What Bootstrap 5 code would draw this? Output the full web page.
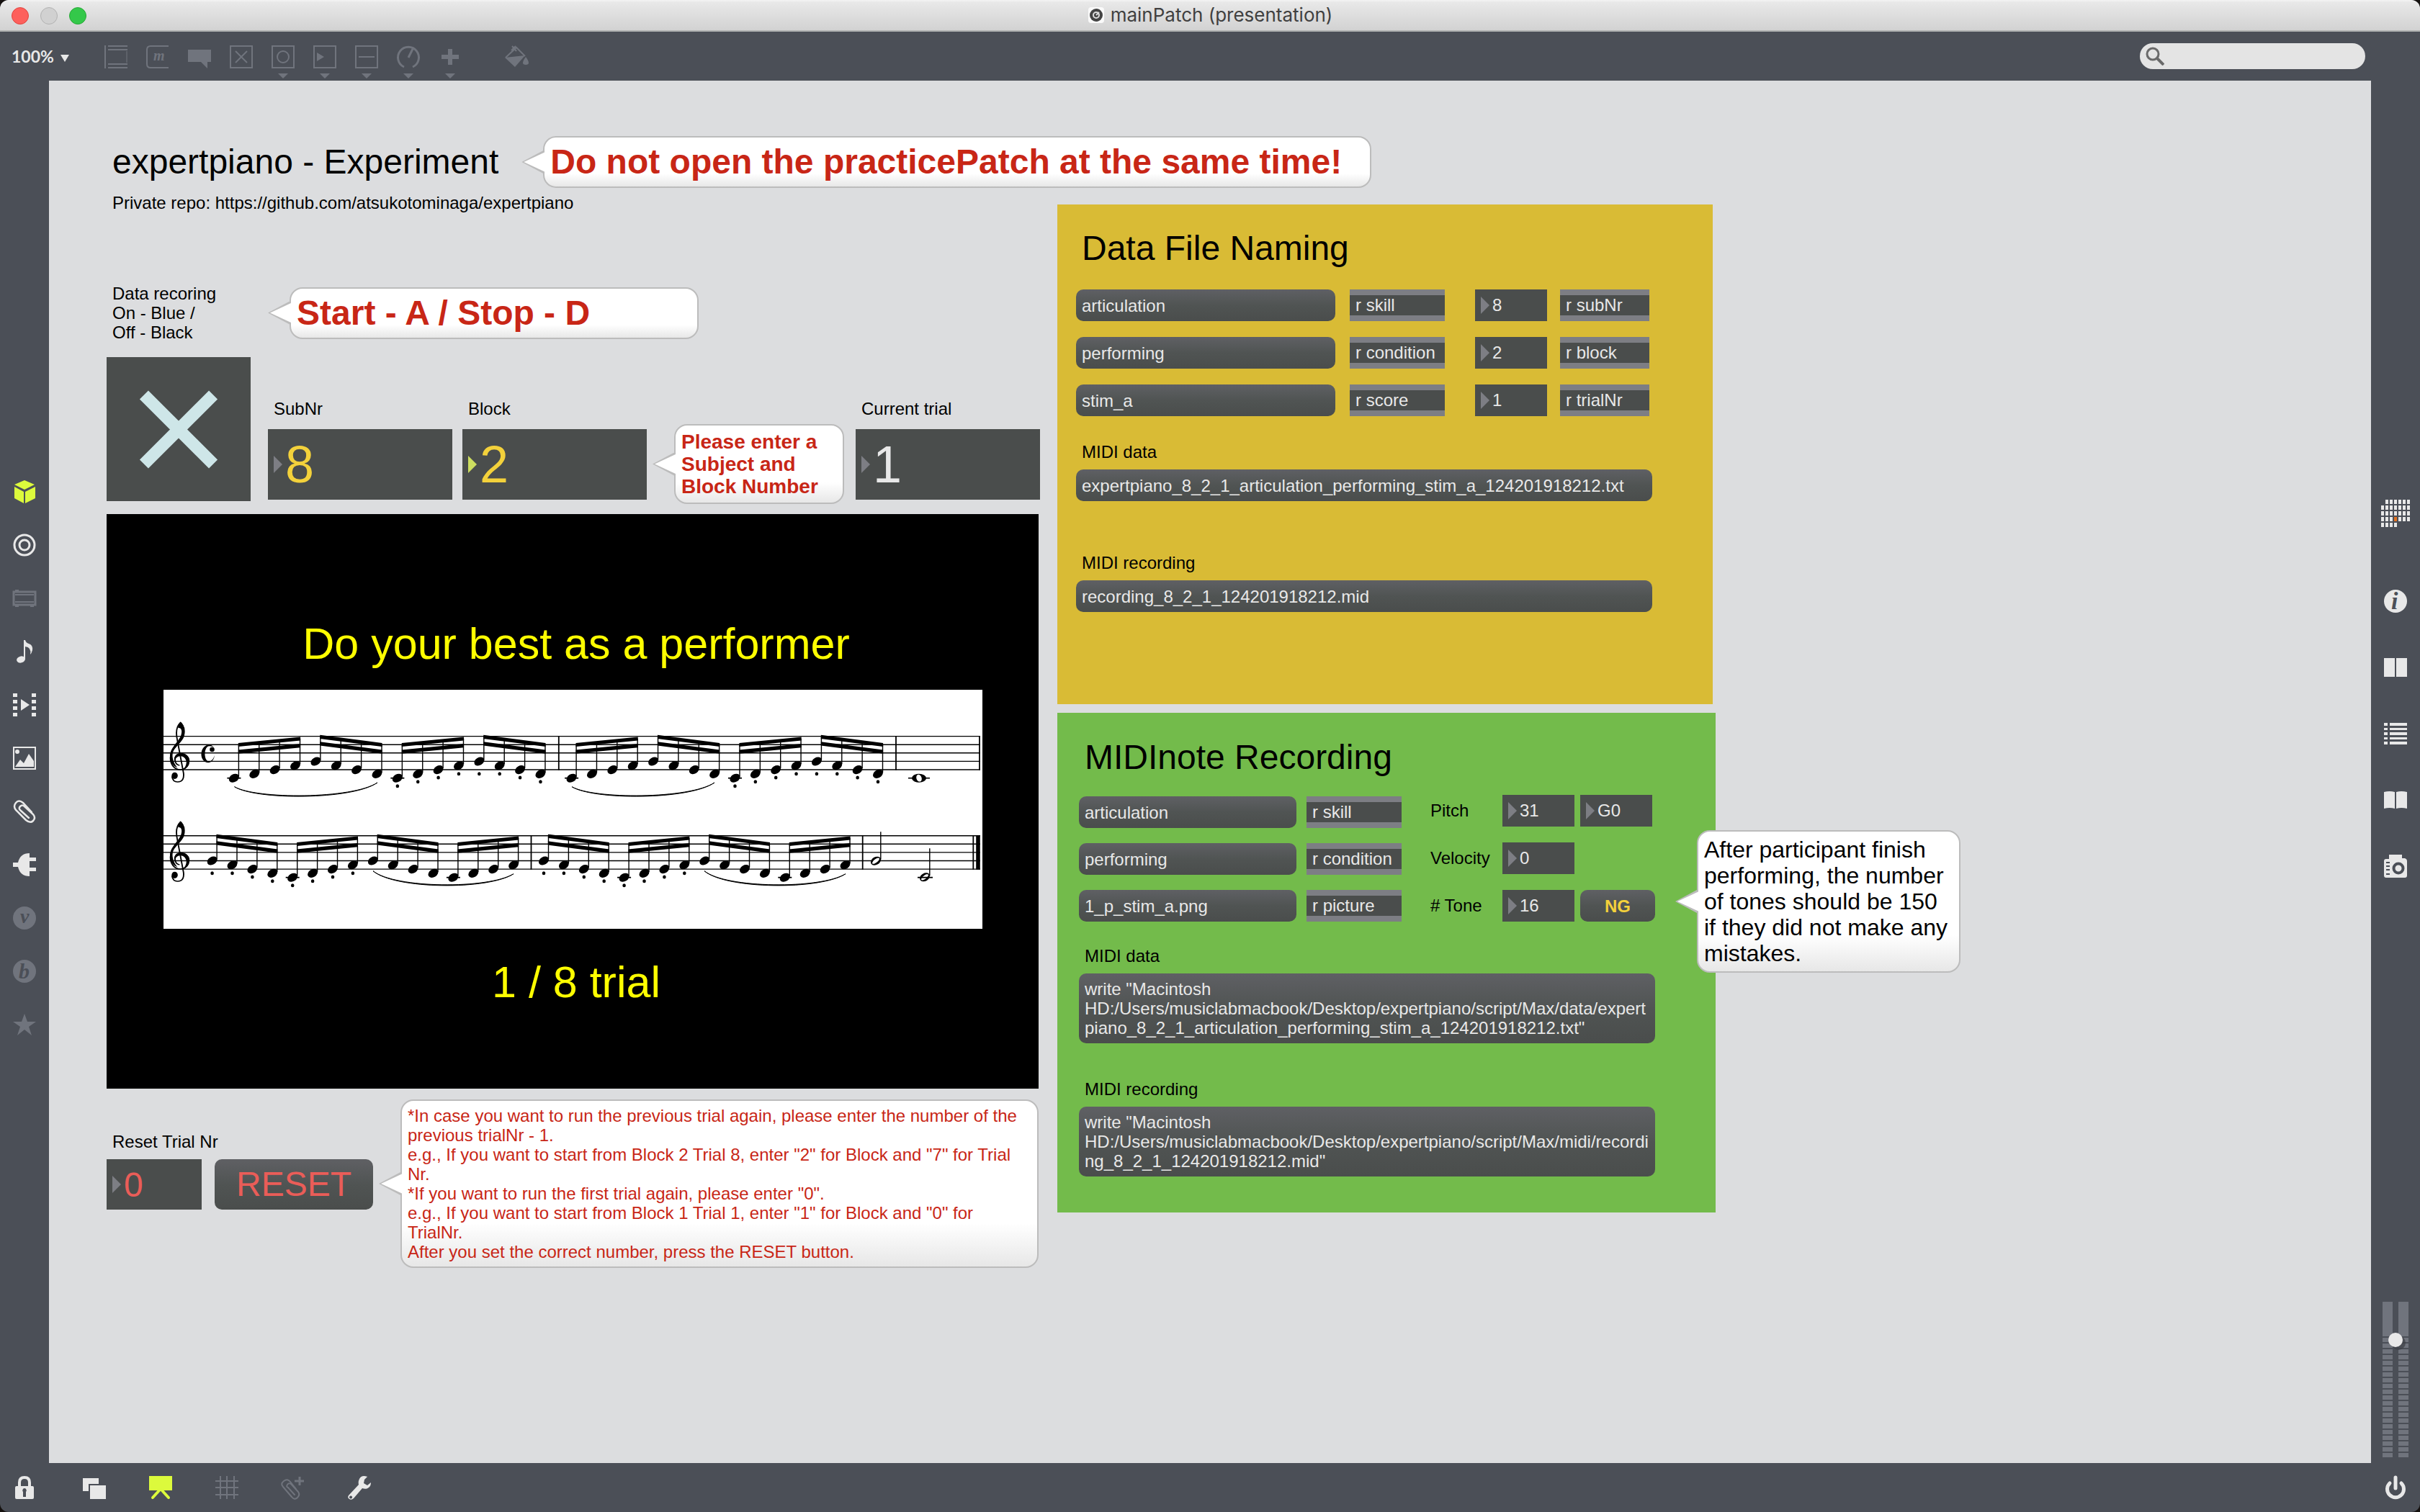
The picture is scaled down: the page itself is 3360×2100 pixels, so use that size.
<!DOCTYPE html>
<html lang="en">
<head>
<meta charset="utf-8">
<meta name="viewport" content="width=device-width, initial-scale=1">
<title>mainPatch (presentation)</title>
<link href="https://cdn.jsdelivr.net/npm/bootstrap@5.3.0/dist/css/bootstrap.min.css" rel="stylesheet">
<style>
:root{--bar:#4b4f57;--ink:#e8e8e8;--dim:#70747d;--box:#4a4d4c;--lime:#dcfa3c;--red:#c82616;--amber:#f3d13b;}
body{background:#15110f;font-family:"Liberation Sans",Arial,sans-serif;font-size:24px;line-height:27px;color:#000;}
.win{min-height:100vh;background:var(--bar);border-radius:12px;overflow:hidden;}
.titlebar{height:44px;background:linear-gradient(#f4f4f4,#e8e8e8 8%,#d2d2d2);border-bottom:2px solid #b0b2b2;color:#404040;font:26px/40px Inter,"Liberation Sans",sans-serif;}
.lights{left:16px;top:10px;gap:16px;}
.lights button{width:24px;height:24px;border-radius:50%;padding:0;border:1px solid #e0443e;background:#fd605c;}
.lights button:nth-child(2){background:#d1d1d1;border-color:#b1b1b1;}
.lights button:nth-child(3){background:#34c84a;border-color:#27a836;}
.toolbar{height:68px;padding:0 76px 0 16px;color:var(--dim);}
.ico{background:none;border:0;padding:0;color:inherit;display:block;line-height:0;}
.ico svg{display:block;overflow:visible;}
.zoomsel{width:129px;font:bold 23px/28px Lato,sans-serif;color:var(--ink);background:none;border:0;text-align:left;padding:0;}
.tools{gap:26px;padding-top:18px;}
.tools .fillbtn{margin-left:34px;}
.finder{width:313px;height:36px;border-radius:18px;background:#e4e4e4;padding:0 8px;color:#6a6a6a;}
.finder input{background:none;border:0;width:250px;font-size:22px;outline:0;}
.side{width:68px;color:var(--ink);}
.side-l{padding-top:555px;gap:42px;}
.side-r{padding-top:581px;gap:60px;padding-bottom:8px;}
.side-r .firstico{margin-bottom:26px;}
.off{color:var(--dim);}
.on{color:var(--lime);}
.footbar{height:68px;color:var(--ink);padding:0 18px;gap:60px;}
.footbar .lockbtn{margin-right:5px;}
.canvas{background:#dcdddf;padding:77px 80px;}
.level{width:36px;height:216px;}
.level i{flex:1;background:linear-gradient(var(--dim) 48px,transparent 48px),repeating-linear-gradient(transparent 0 2px,var(--dim) 2px 8px);}
.level input{position:absolute;width:216px;height:36px;left:-90px;top:90px;transform:rotate(-90deg);appearance:none;background:none;margin:0;}
.level input::-webkit-slider-thumb{appearance:none;width:20px;height:20px;border-radius:50%;background:var(--ink);border:0;box-shadow:-4px 4px 0 rgba(60,63,68,.7);}
.big{font-size:48px;line-height:54px;font-weight:400;}
.tag{padding-left:8px;display:block;}
.tip{position:relative;border:2px solid #bcbcbc;border-radius:18px;background:linear-gradient(#fff 74%,#e7e7e7);padding:7px 14px 7px 8px;flex:none;color:var(--red);}
.tip::before,.tip::after{content:"";position:absolute;clip-path:polygon(0 50%,100% 0,100% 100%);}
.tip::before{left:-32px;width:30px;height:32px;top:calc(50% - 16px);background:#bcbcbc;}
.tip::after{left:-29px;width:30px;height:28px;top:calc(50% - 14px);background:#fff;}
.tip-b{font-weight:700;}
.tip-m{font-size:28px;line-height:31px;}
.tip-l{font-size:32px;line-height:36px;color:#000;}
.left{width:1294px;flex:none;}
.w-head{width:1150px;margin-left:62px;}.w-start{width:568px;}.w-sub{width:236px;margin:0 0 -4px 24px;}.w-long{width:886px;}.w-after{width:366px;}
.repo{margin-top:7px;}
.startrow{margin-top:99px;}
.startrow .tag{width:254px;}
.inputs{margin-top:21px;margin-right:-2px;gap:14px;height:200px;}
.tgl{appearance:none;width:200px;height:200px;background:var(--box);margin:0 10px 0 0;display:block;flex:none;position:relative;}
.tgl::before,.tgl::after{content:"";position:absolute;left:32px;top:92px;width:136px;height:17px;background:#cee6e8;transform:rotate(45deg);}
.tgl::after{transform:rotate(-45deg);}
.num{position:relative;background:var(--box);color:var(--ink);height:44px;width:100px;flex:none;}
.num::before{content:"";position:absolute;left:8px;top:50%;width:12px;height:24px;margin-top:-12px;background:#7d7e84;clip-path:polygon(0 0,100% 50%,0 100%);}
.num.hot::before{background:#cdde60;}
.num input{width:100%;height:100%;border:0;background:none;color:inherit;padding:0 0 0 24px;outline:0;display:block;}
.num-xl{width:256px;height:98px;font-size:72px;margin:15px 0 2px;}
.num-l{width:132px;height:70px;font-size:48px;margin-right:18px;}
.screen{background:#000;color:#ff0;height:798px;margin-top:18px;padding-top:146px;font-size:61px;line-height:68px;}
.screen div{padding-left:10px;}
.screen svg{width:1137px;height:332px;background:#fff;margin:30px 0 40px;max-width:100%;}
.msg{background:linear-gradient(#5f6064,#505453 50%,#4a4d4c);border:0;border-radius:10px;color:var(--ink);padding:8px;min-height:44px;text-align:left;display:block;flex:none;line-height:27px;overflow-wrap:break-word;}
.msg-c{text-align:center;}
.amber{color:var(--amber);}
.coral{color:#ea5d58;}
.resetrow{margin-top:15px;}
.resetrow .grp{margin:45px 38px 0 0;}
.resetrow .grp .tag{margin-bottom:11px;}
.resetbtn{width:220px;font-size:48px;line-height:54px;}
.obj{background:var(--box);border:solid #7d7e84;border-width:8px 0;height:44px;line-height:28px;padding-left:8px;color:var(--ink);flex:none;width:132px;}
.right{margin:23px 0 0 26px;gap:12px;}
.panel{height:694px;position:relative;}
.p-data{background:#d9bb35;width:910px;padding:34px 26px;}
.p-note{background:#73bb4b;width:914px;padding:35px 30px;}
.p-data .rows{gap:22px;margin:30px 0 36px;}
.p-data .rows .msg{width:360px;margin-right:20px;}
.p-data .rows .obj{margin-right:42px;}
.p-data .rows .obj:last-child{width:124px;margin:0 0 0 18px;}
.wide{width:800px;margin-top:11px;}
.p-data .again{margin-top:72px;}
.p-note .rows{margin:25px 0 34px;}
.msgs .msg{width:302px;}
.g21{gap:21px;}.g22{gap:22px;}
.p-note .objs{margin:0 40px 0 14px;}
.p-note .names{width:100px;flex:none;}
.p-note .names label{line-height:44px;}
.p-note .again{margin-top:50px;}
.ngbtn{width:104px;font-weight:700;}
.aftertip{position:absolute;left:888px;top:163px;}
</style>
</head>
<body>
<div class="win d-flex flex-column">
<header class="titlebar position-relative d-flex justify-content-center align-items-center">
  <div class="lights position-absolute d-flex"><button aria-label="Close"></button><button aria-label="Minimise"></button><button aria-label="Zoom"></button></div>
  <svg class="me-2" width="24" height="24" viewBox="0 0 24 24"><rect x="1" y="1" width="22" height="22" rx="4" fill="#fafafa"/><circle cx="12" cy="12" r="9" fill="#444"/><circle cx="12" cy="12" r="4" fill="none" stroke="#ddd" stroke-width="2"/><path d="M12 12l4-4" stroke="#ddd" stroke-width="2"/></svg>
  <span>mainPatch (presentation)</span>
</header>
<nav class="toolbar d-flex justify-content-between" aria-label="Toolbar">
  <div class="d-flex">
    <button class="zoomsel">100% <svg class="ms-1" width="12" height="12" viewBox="0 0 12 12"><path d="M0 1h12L6 11z" fill="currentColor"/></svg></button>
    <div class="tools d-flex">
      <button class="ico" aria-label="Object"><svg width="32" height="48" fill="none" stroke="currentColor" stroke-width="2"><path d="M1 0v32M5 1h27M5 6h27M5 26h27M5 31h27"/><path d="M31 8v16" stroke-width="1"/></svg></button>
      <button class="ico" aria-label="Message"><svg width="32" height="48" fill="none" stroke="currentColor" stroke-width="2"><path d="M31 1H6Q1 1 1 6V26Q1 31 6 31H31"/><text x="10" y="21" font-family="Liberation Serif" font-style="italic" font-weight="bold" font-size="20" fill="currentColor" stroke="none">m</text></svg></button>
      <button class="ico" aria-label="Comment"><svg width="32" height="48" fill="currentColor"><path d="M0 6h32v17h-5v9l-9-9H0z"/></svg></button>
      <button class="ico" aria-label="Toggle"><svg width="32" height="48" fill="none" stroke="currentColor" stroke-width="2"><path d="M1 1h30v30H1zM8 8l16 16M24 8L8 24"/></svg></button>
      <button class="ico" aria-label="Button"><svg width="32" height="48" fill="none" stroke="currentColor" stroke-width="2"><path d="M1 1h30v30H1z"/><circle cx="16" cy="16" r="8"/><path d="M9 39h14l-7 7z" fill="currentColor" stroke="none"/></svg></button>
      <button class="ico" aria-label="Number"><svg width="32" height="48" fill="none" stroke="currentColor" stroke-width="2"><path d="M1 1h30v30H1z"/><path d="M5 10l10 6-10 6zM9 39h14l-7 7z" fill="currentColor" stroke="none"/></svg></button>
      <button class="ico" aria-label="Slider"><svg width="32" height="48" fill="none" stroke="currentColor" stroke-width="2"><path d="M1 1h30v30H1zM5 16h22"/><path d="M9 39h14l-7 7z" fill="currentColor" stroke="none"/></svg></button>
      <button class="ico" aria-label="Dial"><svg width="32" height="48" fill="none" stroke="currentColor" stroke-width="3"><path d="M10 30A14.500 14.500 0 1 1 22 30M16 17l6-12"/><path d="M9 39h14l-7 7z" fill="currentColor" stroke="none"/></svg></button>
      <button class="ico" aria-label="Add"><svg width="32" height="48" fill="currentColor"><path d="M13 5h6v8h9v6h-9v8h-6v-8H4v-6h9zM9 39h14l-7 7z"/></svg></button>
      <button class="ico fillbtn" aria-label="Format palette"><svg width="34" height="48" fill="none" stroke="currentColor" stroke-width="2"><path d="M1 17L16 3l12 12M10 1l6 7M15 1l-6 6"/><path d="M0 17l28-3-14 16zM29 16q8 11 0 11t0-11z" fill="currentColor" stroke="none"/></svg></button>
    </div>
  </div>
  <label class="finder d-flex align-items-center align-self-center"><svg width="26" height="26" fill="none" stroke="currentColor" stroke-width="3"><circle cx="10" cy="10" r="8"/><path d="M16 16l9 9" stroke-width="4"/></svg><input type="search" aria-label="Search"></label>
</nav>
<div class="d-flex flex-grow-1">
  <aside class="side side-l d-flex flex-column align-items-center">
    <button class="ico on" aria-label="Packages"><svg width="32" height="32" fill="currentColor"><path d="M16 0l14 6-14 7L2 6zM2 9l13 7v16L2 25zM31 9v16l-14 7V16z"/></svg></button>
    <button class="ico" aria-label="Objects"><svg width="32" height="32" fill="none" stroke="currentColor" stroke-width="3"><circle cx="16" cy="16" r="14"/><circle cx="16" cy="16" r="7"/></svg></button>
    <button class="ico off" aria-label="Devices"><svg width="32" height="32" fill="none" stroke="currentColor" stroke-width="3"><path d="M1 7h30v18H1z"/><path d="M3 11h26M3 21h26" stroke-width="2"/><path d="M3 4h5v3H3zM3 25h5v3H3zM24 25h5v3h-5z" fill="currentColor" stroke="none"/></svg></button>
    <button class="ico" aria-label="Audio"><svg width="32" height="32" fill="currentColor"><ellipse cx="11" cy="27" rx="6" ry="4.500" transform="rotate(-15 11 27)"/><path d="M15 0h2q1 4 5 5 6 2 5 9-1 4-3 6 2-10-7-11v18h-2z"/></svg></button>
    <button class="ico" aria-label="Video"><svg width="32" height="32" fill="currentColor"><path d="M0 0h6v5H0zM0 9h6v5H0zM0 18h6v5H0zM0 27h6v5H0zM26 0h6v5h-6zM26 9h6v5h-6zM26 18h6v5h-6zM26 27h6v5h-6zM11 8l12 8-12 8z"/></svg></button>
    <button class="ico" aria-label="Images"><svg width="32" height="32" fill="currentColor"><path d="M1 1h30v30H1z" fill="none" stroke="currentColor" stroke-width="2"/><circle cx="6" cy="7" r="3"/><path d="M3 28l7-10 5 5 7-13 7 10v8z"/></svg></button>
    <button class="ico" aria-label="Clippings"><svg width="32" height="32" fill="none" stroke="currentColor" stroke-width="2.500" stroke-linecap="round"><path d="M26 17L14 4Q8 -1 4 4T4 14L18 28Q24 33 28 29T28 20L16 9Q13 6 10 9T11 15L22 25"/></svg></button>
    <button class="ico" aria-label="Plug-ins"><svg width="32" height="32" fill="currentColor"><path d="M23 0v6h9v5h-9v9h9v5h-9v7q-13 0-16-13H0v-6h7Q10 0 23 0z"/></svg></button>
    <button class="ico off" aria-label="Vizzie"><svg width="32" height="32" fill="currentColor"><circle cx="16" cy="16" r="16"/><text x="10" y="23" font-family="Liberation Serif" font-style="italic" font-weight="bold" font-size="28" fill="#4b4f57">v</text></svg></button>
    <button class="ico off" aria-label="Beap"><svg width="32" height="32" fill="currentColor"><circle cx="16" cy="16" r="16"/><text x="8" y="26" font-family="Liberation Serif" font-style="italic" font-weight="bold" font-size="30" fill="#4b4f57">b</text></svg></button>
    <button class="ico off" aria-label="Favourites"><svg width="32" height="32" fill="currentColor"><path d="M16 1l4 11h12l-10 7 4 12-10-8-10 8 4-12L0 12h12z"/></svg></button>
  </aside>
  <main class="canvas flex-grow-1">
    <div class="d-flex align-items-center">
      <h1 class="big tag m-0">expertpiano - Experiment</h1>
      <div class="tip tip-b big w-head">Do not open the practicePatch at the same time!</div>
    </div>
    <div class="d-flex">
      <section class="left">
        <div class="tag repo">Private repo: https://github.com/atsukotominaga/expertpiano</div>
        <div class="startrow d-flex align-items-center">
          <label class="tag" for="rec">Data recoring<br>On - Blue /<br>Off - Black</label>
          <div class="tip tip-b big w-start">Start - A / Stop - D</div>
        </div>
        <div class="inputs d-flex align-items-end">
          <input type="checkbox" class="tgl" id="rec" checked>
          <div><label class="tag" for="sub">SubNr</label><div class="num num-xl amber"><input id="sub" value="8"></div></div>
          <div><label class="tag" for="blk">Block</label><div class="num num-xl hot amber"><input id="blk" value="2"></div></div>
          <div class="tip tip-b tip-m w-sub">Please enter a<br>Subject and<br>Block Number</div>
          <div class="ms-auto"><label class="tag" for="cur">Current trial</label><div class="num num-xl"><input id="cur" value="1"></div></div>
        </div>
        <div class="screen d-flex flex-column align-items-center">
          <div>Do your best as a performer</div>
          <svg id="score" viewBox="0 0 1137 332" role="img" aria-label="Two staves of piano exercise"></svg>
          <div>1 / 8 trial</div>
        </div>
        <div class="resetrow d-flex align-items-start">
          <div class="grp">
            <label class="tag" for="rst">Reset Trial Nr</label>
            <div class="d-flex"><div class="num num-l coral"><input id="rst" value="0"></div><button class="msg msg-c resetbtn coral">RESET</button></div>
          </div>
          <div class="tip w-long">*In case you want to run the previous trial again, please enter the number of the previous trialNr - 1.<br>e.g., If you want to start from Block 2 Trial 8, enter "2" for Block and "7" for Trial Nr.<br>*If you want to run the first trial again, please enter "0".<br>e.g., If you want to start from Block 1 Trial 1, enter "1" for Block and "0" for TrialNr.<br>After you set the correct number, press the RESET button.</div>
        </div>
      </section>
      <section class="right d-flex flex-column">
        <div class="panel p-data">
          <h2 class="big tag m-0">Data File Naming</h2>
          <div class="rows d-flex flex-column">
            <div class="d-flex"><button class="msg">articulation</button><div class="obj">r skill</div><div class="num"><input aria-label="subNr" value="8"></div><div class="obj">r subNr</div></div>
            <div class="d-flex"><button class="msg">performing</button><div class="obj">r condition</div><div class="num"><input aria-label="block" value="2"></div><div class="obj">r block</div></div>
            <div class="d-flex"><button class="msg">stim_a</button><div class="obj">r score</div><div class="num"><input aria-label="trialNr" value="1"></div><div class="obj">r trialNr</div></div>
          </div>
          <div class="tag">MIDI data</div>
          <button class="msg wide">expertpiano_8_2_1_articulation_performing_stim_a_124201918212.txt</button>
          <div class="tag again">MIDI recording</div>
          <button class="msg wide">recording_8_2_1_124201918212.mid</button>
        </div>
        <div class="panel p-note">
          <h2 class="big tag m-0">MIDInote Recording</h2>
          <div class="rows d-flex align-items-end">
            <div class="msgs d-flex flex-column g21"><button class="msg">articulation</button><button class="msg">performing</button><button class="msg">1_p_stim_a.png</button></div>
            <div class="objs d-flex flex-column g21"><div class="obj">r skill</div><div class="obj">r condition</div><div class="obj">r picture</div></div>
            <div class="names d-flex flex-column g22"><label for="pit">Pitch</label><label for="vel">Velocity</label><label for="ton"># Tone</label></div>
            <div class="d-flex flex-column g22">
              <div class="d-flex gap-2"><div class="num"><input id="pit" value="31"></div><div class="num"><input aria-label="Note name" value="G0"></div></div>
              <div class="num"><input id="vel" value="0"></div>
              <div class="d-flex gap-2"><div class="num"><input id="ton" value="16"></div><button class="msg msg-c ngbtn amber">NG</button></div>
            </div>
          </div>
          <div class="tag">MIDI data</div>
          <button class="msg wide">write "Macintosh HD:/Users/musiclabmacbook/Desktop/expertpiano/script/Max/data/expert<wbr>piano_8_2_1_articulation_performing_stim_a_124201918212.txt"</button>
          <div class="tag again">MIDI recording</div>
          <button class="msg wide">write "Macintosh HD:/Users/musiclabmacbook/Desktop/expertpiano/script/Max/midi/recordi<wbr>ng_8_2_1_124201918212.mid"</button>
          <div class="tip tip-l w-after aftertip">After participant finish performing, the number of tones should be 150 if they did not make any mistakes.</div>
        </div>
      </section>
    </div>
  </main>
  <aside class="side side-r d-flex flex-column align-items-center">
    <button class="ico firstico" aria-label="Calendar"><svg id="cells" width="40" height="40" fill="currentColor"></svg></button>
    <button class="ico" aria-label="Inspector"><svg width="32" height="32" fill="currentColor"><circle cx="16" cy="16" r="16"/><text x="10" y="27" font-family="Liberation Serif" font-style="italic" font-weight="bold" font-size="34" fill="#4b4f57">i</text></svg></button>
    <button class="ico" aria-label="Split view"><svg width="32" height="32" fill="currentColor"><path d="M0 3h15v26H0zM17 3h15v26H17z"/></svg></button>
    <button class="ico" aria-label="Console"><svg width="32" height="32" fill="currentColor"><path d="M0 1h5v4H0zM8 1h24v4H8zM0 8h5v3H0zM8 8h24v3H8zM0 14h5v4H0zM8 14h24v4H8zM0 21h5v3H0zM8 21h24v3H8zM0 27h5v4H0zM8 27h24v4H8z"/></svg></button>
    <button class="ico" aria-label="Reference"><svg width="32" height="32" fill="currentColor"><path d="M0 5q8-2 15 0v23q-7-2-15 0zM17 5q7-2 15 0v23q-8-2-15 0z"/></svg></button>
    <button class="ico" aria-label="Snapshots"><svg width="32" height="32" fill="currentColor"><path fill-rule="evenodd" d="M7 0h18v5h4q3 1 3 4v20q0 3-3 3H3q-3 0-3-3V9q0-3 3-3h4zM3 10v2h5v-2zM3 15v2h5v-2zM3 20v2h5v-2zM3 26v2h5v-2z"/><circle cx="20" cy="19" r="6.500" fill="none" stroke="#4b4f57" stroke-width="4"/></svg></button>
    <div class="level position-relative d-flex gap-2 mt-auto"><i></i><i></i><input type="range" min="0" max="100" value="78" aria-label="Output level"></div>
  </aside>
</div>
<footer class="footbar d-flex align-items-center">
  <button class="ico lockbtn" aria-label="Lock"><svg width="32" height="36" fill="currentColor"><path d="M9 18V11q0-7 7-7t7 7v7" fill="none" stroke="currentColor" stroke-width="4"/><path fill-rule="evenodd" d="M5 16h22q2 0 2 2v14q0 2-2 2H5q-2 0-2-2V18q0-2 2-2zM16 19a3 3 0 0 0-2 5v7h4v-7a3 3 0 0 0-2-5z"/></svg></button>
  <button class="ico" aria-label="New view"><svg width="32" height="36" fill="currentColor"><path d="M0 5h22v8H8v10H0zM10 15h22v19H10z"/></svg></button>
  <button class="ico on" aria-label="Presentation"><svg width="32" height="36" fill="currentColor"><path d="M0 2h32v20H0z"/><path d="M15 21L5 32M17 21l10 11" stroke="currentColor" stroke-width="4" stroke-linecap="round"/></svg></button>
  <button class="ico off" aria-label="Grid"><svg width="32" height="36" fill="none" stroke="currentColor" stroke-width="2"><path d="M7 2v32M16 2v32M26 2v32M0 9h32M0 18h32M0 28h32"/></svg></button>
  <button class="ico off" aria-label="Add clipping"><svg width="32" height="36" fill="none" stroke="currentColor" stroke-width="2" stroke-linecap="round"><path d="M20 20L12 10Q8 5 3 9T2 17L14 31Q18 36 22 32T23 24L13 13Q10 11 8 14T9 18L18 28"/><path d="M25 3v12M18 9h13" stroke-width="3" stroke-linecap="butt"/></svg></button>
  <button class="ico" aria-label="Tools"><svg width="32" height="36" fill="currentColor"><path fill-rule="evenodd" d="M27 3q-8-3-11 3-2 4-1 8L1 29q-2 3 1 5t6-1l12-14q5 2 9-1 3-2 3-7l-5 4-5-3 1-5zM4 29.500a2 2 0 1 0 .1 0z"/></svg></button>
  <button class="ico ms-auto" aria-label="Audio on or off"><svg width="32" height="36" fill="none" stroke="currentColor" stroke-width="5" stroke-linecap="round"><path d="M16 4v15M8 12a11.500 11.500 0 1 0 16 0"/></svg></button>
</footer>
</div>
<script src="https://cdn.jsdelivr.net/npm/bootstrap@5.3.0/dist/js/bootstrap.bundle.min.js"></script>
<script>
// Dot matrix of the calendar icon: first and last rows are partial.
(function(){
  let s='';
  for(let r=0;r<5;r++)for(let c=0;c<7;c++){
    if((r===0&&c===0)||(r===4&&c>3))continue;
    s+=`<rect x="${c*6}" y="${1+r*8}" width="4" height="6"${r===3&&c===3?' fill="#e07020"':''}/>`;
  }
  document.getElementById('cells').innerHTML=s;
})();
// Engraving of the exercise: k counts diatonic steps above middle C.
(function(){
  let s='';
  const line=(x1,y1,x2,y2,w)=>{s+=`<path d="M${x1} ${y1}L${x2} ${y2}" stroke="#000" stroke-width="${w}"/>`;};
  const head=(x,y)=>{s+=`<ellipse cx="${x}" cy="${y}" rx="7.500" ry="5.400" transform="rotate(-32 ${x} ${y})"/>`;};
  const dotY=[133.7,127.7,122,116.7,116.7];
  const clef=dy=>{s+=`<g transform="translate(0 ${dy}) scale(.421 .3333) translate(-204 -53)"><ellipse cx="241" cy="411" rx="10" ry="14"/>
    <path fill="none" stroke="#000" stroke-width="4.500" d="M232 414C234 430 240 437 250 437C268 437 272 420 270 400L250 266C244 232 247 204 260 190C273 205 274 226 270 245C264 275 228 295 227 335C226 365 240 386 260 386C280 384 289 365 287 348C285 325 270 319 258 320C245 322 239 338 243 352C245 362 250 367 257 368"/>
    <path d="M273 236C268 268 244 287 236 310C230 330 236 358 250 378C232 370 223 345 226 320C230 290 255 268 262 242C266 224 264 212 253 212C250 212 256 187 260 187C268 190 274 215 273 236zM242 352C235 330 248 317 262 317C280 318 291 335 290 350C288 370 280 380 268 387C276 376 281 362 279 350C276 336 268 329 258 330C248 331 243 340 242 352z"/></g>`;};
  function staff(top,right){for(let i=0;i<5;i++)line(0,top+i*11.6,right,top+i*11.6,1.4);}
  function bar(x0,dx,dy,pitches,dotFrom){
    for(let g=0;g<4;g++){
      const up=pitches[g*4]===0, xa=x0+g*4*dx, xb=xa+3*dx;
      const [a,b]=up?[76.5,68]:[65.3,76.5];
      [0,9.6].forEach(o=>{s+=`<path d="M${xa-.6} ${a+dy+o-2.6}L${xb+.6} ${b+dy+o-2.6}v5.200L${xa-.6} ${a+dy+o+2.6}z"/>`;});
      for(let n=0;n<4;n++){
        const i=g*4+n,k=pitches[i],x=xa+n*dx,y=122.7+dy-5.8*k;
        line(x,a+(b-a)*n/3+dy,x,y-2,1.4);
        head(x-6.5,y);
        if(k===0)line(x-16,y,x+3,y,1.8);
        if(i>=dotFrom&&i<dotFrom+8)s+=`<ellipse cx="${x-6.5}" cy="${dotY[k]+dy}" rx="2.300" ry="2.500"/>`;
      }
    }
  }
  const slur=(x1,y1,x2,y2,d,e)=>{s+=`<path d="M${x1} ${y1}C${x1+30} ${d} ${x2-35} ${e} ${x2} ${y2}C${x2-35} ${e+1.4} ${x1+30} ${d+1.4} ${x1} ${y1}z" stroke="#000" stroke-width="1"/>`;};
  const A=[0,1,2,3,4,3,2,1,0,1,2,3,4,3,2,1], B=[4,3,2,1,0,1,2,3,4,3,2,1,0,1,2,3];
  staff(64.6,1134); staff(202.7,1134);
  clef(0); clef(138);
  s+='<path d="M70 80c-3-4-7-4-10-3c-10 4-10 21 0 24c6 1 10-3 11-10c-2 6-5 9-9 8.500c-6-3-6-18 0-21q4-1 8 1.500z"/><circle cx="67.500" cy="83" r="3.300"/>';
  bar(104.4,28.37,0,A,8); bar(573.1,28.36,0,A,8);
  slur(98.5,134.7,297,129,152,152); slur(567,134.7,765,129,152,152);
  [548.8,1017,1133].forEach(x=>line(x,64,x,111.6,1.8));
  line(1034,122.7,1064,122.7,1.6);
  s+='<ellipse cx="1049" cy="122.700" rx="10" ry="6"/><ellipse cx="1049" cy="122.700" rx="3.600" ry="5" fill="#fff" transform="rotate(-20 1049 122.700)"/>';
  bar(74.1,27.9,138,B,0); bar(534.5,27.9,138,B,0);
  slur(291,251.7,486,255.7,276,277); slur(751,251.7,947,255.7,276,277);
  [510.5,970.7,1124.3].forEach(x=>line(x,202,x,249.8,1.8));
  line(1131,202,1131,249.8,5.6);
  [[989,237.7,197.3],[1057,260.3,220.3]].forEach(([x,y,t])=>{
    s+=`<ellipse cx="${x}" cy="${y}" rx="7.500" ry="5.400" transform="rotate(-32 ${x} ${y})"/><ellipse cx="${x}" cy="${y}" rx="6" ry="2.400" fill="#fff" transform="rotate(-38 ${x} ${y})"/>`;
    line(x+6.8,y-2,x+6.8,t,1.4);
  });
  line(1047,260.7,1068,260.7,1.8);
  document.getElementById('score').innerHTML=s;
})();
</script>
</body>
</html>
